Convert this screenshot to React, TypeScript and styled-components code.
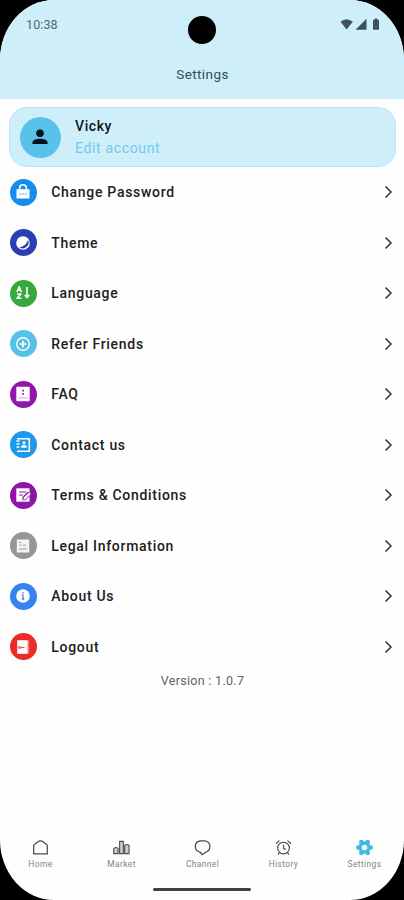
import React from "react";
import styled, { createGlobalStyle } from "styled-components";

const GlobalStyle = createGlobalStyle`
  *, *::before, *::after { box-sizing: border-box; }
  body { margin: 0; background: #000; font-family: Roboto, sans-serif; }
`;

const Phone = styled.main`
  width: 404px;
  height: 900px;
  display: flex;
  flex-direction: column;
  overflow: hidden;
  border-radius: 54px / 60px;
  background: #fefefe;
`;

const Header = styled.header`
  height: 99px;
  flex: none;
  display: flex;
  flex-direction: column;
  background: #ceeefa;
`;

const StatusBar = styled.div`
  height: 60px;
  display: grid;
  grid-template-columns: 1fr 28px 1fr;
  align-items: start;
`;

const Clock = styled.time`
  padding: 17px 0 0 26px;
  font-size: 12.5px;
  line-height: 15px;
  letter-spacing: 0.1px;
  color: #53686f;
`;

const Camera = styled.div`
  width: 28px;
  height: 28px;
  margin-top: 16px;
  border-radius: 50%;
  background: #000;
`;

const StatusIcons = styled.div`
  display: flex;
  justify-content: flex-end;
  padding: 18px 23px 0 0;
`;

const Title = styled.h1`
  margin: 5px 0 0;
  text-align: center;
  font-size: 13.5px;
  line-height: 18px;
  font-weight: 400;
  letter-spacing: 0.4px;
  text-indent: 1px;
  color: #344b53;
`;

const ProfileCard = styled.section`
  height: 60px;
  flex: none;
  margin: 8px 8px 0 9px;
  padding: 0 9px 0 9.5px;
  display: flex;
  align-items: center;
  gap: 14.5px;
  border: 1px solid #b9e4f3;
  border-radius: 18px;
  background: #ceeefa;
`;

const Avatar = styled.div`
  width: 41px;
  height: 41px;
  display: grid;
  place-items: center;
  border-radius: 50%;
  background: #58c2eb;
`;

const ProfileName = styled.div`
  font-size: 14px;
  line-height: 21px;
  font-weight: 500;
  letter-spacing: 0.6px;
  color: #101719;
`;

const ProfileLink = styled.div`
  font-size: 14px;
  line-height: 22px;
  letter-spacing: 0.65px;
  color: #72caec;
`;

const List = styled.ul`
  margin: 0;
  padding: 0 9px 0 9.5px;
  list-style: none;
`;

const Row = styled.li`
  height: 50.5px;
  display: grid;
  grid-template-columns: 28px 1fr 14px;
  column-gap: 13.75px;
  align-items: center;
`;

const Badge = styled.span<{ $color: string }>`
  width: 27px;
  height: 27px;
  display: grid;
  place-items: center;
  border-radius: 50%;
  background: ${({ $color }) => $color};
`;

const Label = styled.span`
  font-size: 14px;
  line-height: 18px;
  font-weight: 500;
  letter-spacing: 0.7px;
  color: #202020;
`;

const Version = styled.p`
  margin: 2px 0 0;
  text-align: center;
  font-size: 12.5px;
  line-height: 14px;
  letter-spacing: 0.3px;
  text-indent: 1px;
  color: #626262;
`;

const BottomNav = styled.nav`
  margin-top: auto;
  height: 49px;
  flex: none;
  display: grid;
  grid-template-columns: repeat(5, 81px);
  justify-content: center;
`;

const Tab = styled.div`
  display: flex;
  flex-direction: column;
  align-items: center;
  gap: 3px;
  padding-left: 1px;
  font-size: 8.5px;
  line-height: 11px;
  letter-spacing: 0.35px;
  color: #858585;
`;

const HomeIndicator = styled.div`
  width: 98px;
  height: 3px;
  flex: none;
  margin: 0 auto 9px;
  border-radius: 2px;
  background: #414141;
`;

const Icon = ({ size = 18, children }: { size?: number; children: React.ReactNode }) => (
  <svg width={size} height={size} viewBox="0 0 18 18" fill="none" strokeLinejoin="round">
    {children}
  </svg>
);

const rows = [
  {
    label: "Change Password",
    color: "#188cec",
    icon: (
      <Icon>
        <path d="M5.7 7V4.7a3.3 3 0 0 1 6.6 0V7" stroke="#fff" strokeWidth="1.5" />
        <path d="M2.5 6.2h13v9.3h-13z" fill="#fff" />
        <path d="M5.5 11h1.5m1.2 0h1.5m1.2 0h1.5" stroke="#188cec" />
      </Icon>
    ),
  },
  {
    label: "Theme",
    color: "#2b3eb4",
    icon: (
      <Icon>
        <circle cx="9" cy="9" r="6.8" fill="#fff" />
        <path d="M14 5.8A6 6 0 0 1 5.4 13.4C10.4 12.4 12.7 10 14 5.8z" fill="#2b3eb4" />
      </Icon>
    ),
  },
  {
    label: "Language",
    color: "#38a93e",
    icon: (
      <Icon>
        <path d="M3 8l2.2-5.3L7.4 8M3.8 6.3h2.8M3 10h4l-4 4.2h4.5M13 3v10M10.8 11l2.2 2.6 2.2-2.6" stroke="#fff" strokeWidth="1.6" />
      </Icon>
    ),
  },
  {
    label: "Refer Friends",
    color: "#58c1ea",
    icon: (
      <Icon>
        <circle cx="9" cy="9" r="6.3" stroke="#fff" strokeWidth="1.4" />
        <path d="M9 5.8v6.4M5.8 9h6.4" stroke="#fff" strokeWidth="1.7" />
      </Icon>
    ),
  },
  {
    label: "FAQ",
    color: "#9217a8",
    icon: (
      <Icon>
        <rect x="2.3" y="1.8" width="13.4" height="14.4" rx="1" fill="#fff" />
        <path d="M8.2 4.7h1.7v1.7H8.2zM8.2 8h1.7v1.7H8.2z" fill="#9217a8" />
        <path d="M4.5 13h9" stroke="#d09bd8" />
      </Icon>
    ),
  },
  {
    label: "Contact us",
    color: "#1d98ec",
    icon: (
      <Icon>
        <path d="M4.5 2.8h10.8v12.4H3M2.5 5h3M2.5 8h3M2.5 11h3M3 2.8h2" stroke="#fff" strokeWidth="1.6" />
        <circle cx="10" cy="6.8" r="1.5" fill="#fff" />
        <path d="M7.2 11.8V10c1.5-1.5 4-1.5 5.5 0v1.8z" fill="#fff" />
      </Icon>
    ),
  },
  {
    label: "Terms & Conditions",
    color: "#8e16a6",
    icon: (
      <Icon>
        <path d="M2.3 2.3h13.2v13.4H2.3z" fill="#fff" />
        <path d="M5 6h7M5 9h4" stroke="#8e16a6" strokeWidth="1.1" />
        <path d="M8.4 14.2v-3.1l5.5-5.5 3.3 3-5.8 5.6z" fill="#8e16a6" />
        <path d="M9.5 13.4v-1.6l5.5-5.3 1.7 1.7-5.6 5.2z" fill="#fff" />
      </Icon>
    ),
  },
  {
    label: "Legal Information",
    color: "#969696",
    icon: (
      <Icon>
        <rect x="2.8" y="2.5" width="12.4" height="13" fill="#f5f5f5" />
        <path d="M5.2 5.5h2M5.5 8.2h2M9 8.2h3M5.2 12h7.6" stroke="#969696" />
      </Icon>
    ),
  },
  {
    label: "About Us",
    color: "#3482f4",
    icon: (
      <Icon>
        <circle cx="9" cy="9" r="6.8" fill="#fff" />
        <path d="M9 5v1.8M7.9 8.1H9v4.2M7.7 12.2h2.7" stroke="#3482f4" strokeWidth="1.2" />
      </Icon>
    ),
  },
  {
    label: "Logout",
    color: "#ed2b25",
    icon: (
      <Icon>
        <path d="M3.2 2.2h10.5v13.6H3.2z" fill="#fff" />
        <path d="M14.7 2.3v13.3" stroke="#ffb5af" strokeWidth=".7" />
        <path d="M4 10l1.6-2 1.7 2zM7.2 9.5h3.3" stroke="#ed2b25" strokeWidth=".9" />
      </Icon>
    ),
  },
];

const tabs = [
  {
    label: "Home",
    icon: <path d="M1.8 15.8V6.5L6 3.2Q9 .7 12 3.2l4.2 3.3v9.3z" stroke="#484848" strokeWidth="1.3" />,
  },
  {
    label: "Market",
    icon: (
      <path d="M.8 15.5V10q2.4-2 4.6 0v5.5zM7 15.5v-13h4v13zM12.4 15.5v-9q2.4-1.4 4.6 0v9z" fill="#ccc" stroke="#505050" strokeWidth="1.2" />
    ),
  },
  {
    label: "Channel",
    icon: <path d="M7 14.2C-.5 12.8-.3 3.3 6.5 2h5c7 1.2 7 9.7 1 12l-4 2.6z" stroke="#484848" strokeWidth="1.3" />,
  },
  {
    label: "History",
    icon: (
      <g stroke="#484848" strokeWidth="1.2">
        <circle cx="9" cy="9.6" r="6.2" />
        <path d="M9 6v4l2.5 1M1 5l3.8-3.3M13.2 1.7L17 5M4.8 14.5l-1.6 2M13.2 14.5l1.6 2" />
      </g>
    ),
  },
  {
    label: "Settings",
    icon: (
      <>
        <g fill="#43b7e6">
          <circle cx="9" cy="9" r="6.5" />
          <circle cx="5.6" cy="3.2" r="2.4" />
          <circle cx="12.4" cy="3.2" r="2.4" />
          <circle cx="2.4" cy="9" r="2.4" />
          <circle cx="15.6" cy="9" r="2.4" />
          <circle cx="5.6" cy="14.8" r="2.4" />
          <circle cx="12.4" cy="14.8" r="2.4" />
        </g>
        <circle cx="9" cy="9" r="3" fill="#e9f8fd" />
      </>
    ),
  },
];

export default function App() {
  return (
    <>
      <GlobalStyle />
      <Phone>
        <Header>
          <StatusBar>
            <Clock>10:38</Clock>
            <Camera />
            <StatusIcons>
              <svg width="41" height="13" viewBox="0 0 41 13" fill="#405158">
                <path d="M.5 3.8Q6.5-1.5 12.8 3.8L6.6 11.5z" />
                <path d="M15.5 11.7L26.5.8v10.9z" />
                <path d="M33 2h1.5V.5h3V2H39v9.8h-6z" />
              </svg>
            </StatusIcons>
          </StatusBar>
          <Title>Settings</Title>
        </Header>
        <ProfileCard>
          <Avatar>
            <svg width="18" height="18" viewBox="0 0 18 18" fill="#071014">
              <circle cx="9" cy="5.2" r="3.8" />
              <path d="M1.5 16v-2c1.2-4.4 13.8-4.4 15 0v2z" />
            </svg>
          </Avatar>
          <div>
            <ProfileName>Vicky</ProfileName>
            <ProfileLink>Edit account</ProfileLink>
          </div>
        </ProfileCard>
        <List>
          {rows.map(({ label, color, icon }) => (
            <Row key={label}>
              <Badge $color={color}>{icon}</Badge>
              <Label>{label}</Label>
              <svg width="14" height="14" viewBox="0 0 14 14" fill="none" stroke="#333" strokeWidth="1.5">
                <path d="M4.5 1.5L10 7l-5.5 5.5" />
              </svg>
            </Row>
          ))}
        </List>
        <Version>Version : 1.0.7</Version>
        <BottomNav>
          {tabs.map(({ label, icon }) => (
            <Tab key={label}>
              <Icon size={17}>{icon}</Icon>
              {label}
            </Tab>
          ))}
        </BottomNav>
        <HomeIndicator />
      </Phone>
    </>
  );
}
